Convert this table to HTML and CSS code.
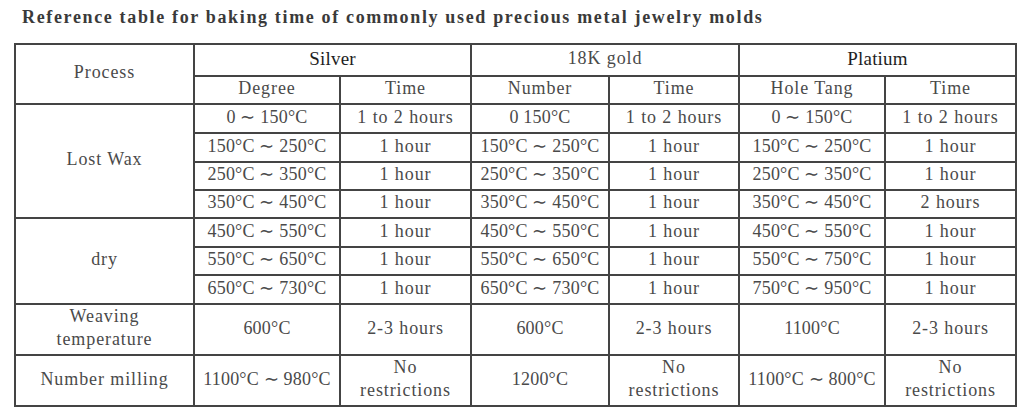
FILE: index.html
```html
<!DOCTYPE html>
<html lang="en">
<head>
<meta charset="utf-8">
<title>Reference table</title>
<link rel="stylesheet" href="styles.css">
</head>
<body>
<div class="page">
  <h1 class="title">Reference table for baking time of commonly used precious metal jewelry molds</h1>
  <table class="ref">
    <colgroup>
      <col class="c-process">
      <col class="c-a">
      <col class="c-b">
      <col class="c-c">
      <col class="c-d">
      <col class="c-e">
      <col class="c-f">
    </colgroup>
    <tbody>
      <tr class="r-h1">
        <td rowspan="2" class="process">Process</td>
        <td colspan="2" class="metal">Silver</td>
        <td colspan="2">18K gold</td>
        <td colspan="2" class="metal">Platium</td>
      </tr>
      <tr class="r-h2">
        <td>Degree</td><td>Time</td>
        <td>Number</td><td>Time</td>
        <td>Hole Tang</td><td>Time</td>
      </tr>
      <tr class="r-a">
        <td rowspan="4">Lost Wax</td>
        <td class="tmp">0 ∼ 150°C</td><td>1 to 2 hours</td>
        <td class="tmp">0 150°C</td><td>1 to 2 hours</td>
        <td class="tmp">0 ∼ 150°C</td><td>1 to 2 hours</td>
      </tr>
      <tr class="r-b">
        <td class="tmp">150°C ∼ 250°C</td><td>1 hour</td>
        <td class="tmp">150°C ∼ 250°C</td><td>1 hour</td>
        <td class="tmp">150°C ∼ 250°C</td><td>1 hour</td>
      </tr>
      <tr class="r-c">
        <td class="tmp">250°C ∼ 350°C</td><td>1 hour</td>
        <td class="tmp">250°C ∼ 350°C</td><td>1 hour</td>
        <td class="tmp">250°C ∼ 350°C</td><td>1 hour</td>
      </tr>
      <tr class="r-d">
        <td class="tmp">350°C ∼ 450°C</td><td>1 hour</td>
        <td class="tmp">350°C ∼ 450°C</td><td>1 hour</td>
        <td class="tmp">350°C ∼ 450°C</td><td>2 hours</td>
      </tr>
      <tr class="r-e">
        <td rowspan="3">dry</td>
        <td class="tmp">450°C ∼ 550°C</td><td>1 hour</td>
        <td class="tmp">450°C ∼ 550°C</td><td>1 hour</td>
        <td class="tmp">450°C ∼ 550°C</td><td>1 hour</td>
      </tr>
      <tr class="r-f">
        <td class="tmp">550°C ∼ 650°C</td><td>1 hour</td>
        <td class="tmp">550°C ∼ 650°C</td><td>1 hour</td>
        <td class="tmp">550°C ∼ 750°C</td><td>1 hour</td>
      </tr>
      <tr class="r-g">
        <td class="tmp">650°C ∼ 730°C</td><td>1 hour</td>
        <td class="tmp">650°C ∼ 730°C</td><td>1 hour</td>
        <td class="tmp">750°C ∼ 950°C</td><td>1 hour</td>
      </tr>
      <tr class="r-tall">
        <td>Weaving<br>temperature</td>
        <td class="tmp">600°C</td><td>2-3 hours</td>
        <td class="tmp">600°C</td><td>2-3 hours</td>
        <td class="tmp">1100°C</td><td>2-3 hours</td>
      </tr>
      <tr class="r-tall2">
        <td>Number milling</td>
        <td class="tmp">1100°C ∼ 980°C</td><td>No<br>restrictions</td>
        <td class="tmp">1200°C</td><td>No<br>restrictions</td>
        <td class="tmp">1100°C ∼ 800°C</td><td>No<br>restrictions</td>
      </tr>
    </tbody>
  </table>
</div>
</body>
</html>
```

FILE: styles.css
```css
html, body {
  margin: 0;
  padding: 0;
  background: #ffffff;
}

.page {
  padding: 7px 0 0 14px;
}

.title {
  margin: 0 0 16px 8px;
  font-family: "Liberation Serif", "Times New Roman", serif;
  font-weight: bold;
  font-size: 18px;
  line-height: 20px;
  letter-spacing: 1.65px;
  color: #3a3a3a;
}

.ref {
  border-collapse: collapse;
  table-layout: fixed;
  width: 1001px;
  font-family: "Liberation Serif", "Times New Roman", serif;
  font-size: 18px;
  letter-spacing: 0.9px;
  color: #4a4a4a;
}

.ref td {
  border: 2px solid #444444;
  text-align: center;
  vertical-align: middle;
  padding: 0 2px 3px;
  line-height: 23px;
  white-space: nowrap;
}

.ref .tmp {
  letter-spacing: 0.2px;
}

.c-process { width: 179px; }
.c-a { width: 146px; }
.c-b { width: 131px; }
.c-c { width: 138px; }
.c-d { width: 130px; }
.c-e { width: 146px; }
.c-f { width: 131px; }

.r-h1 { height: 32px; }
.r-h2 { height: 28px; }
.r-a { height: 29px; }
.r-b { height: 29px; }
.r-c { height: 28px; }
.r-d { height: 28px; }
.r-e { height: 29px; }
.r-f { height: 27px; }
.r-g { height: 29px; }
.r-tall { height: 51px; }
.r-tall2 { height: 50px; }

.ref .metal {
  font-size: 19px;
  letter-spacing: 0.2px;
  color: #1e1e1e;
  padding-bottom: 4px;
}

.ref .process {
  padding-bottom: 4px;
}
```
